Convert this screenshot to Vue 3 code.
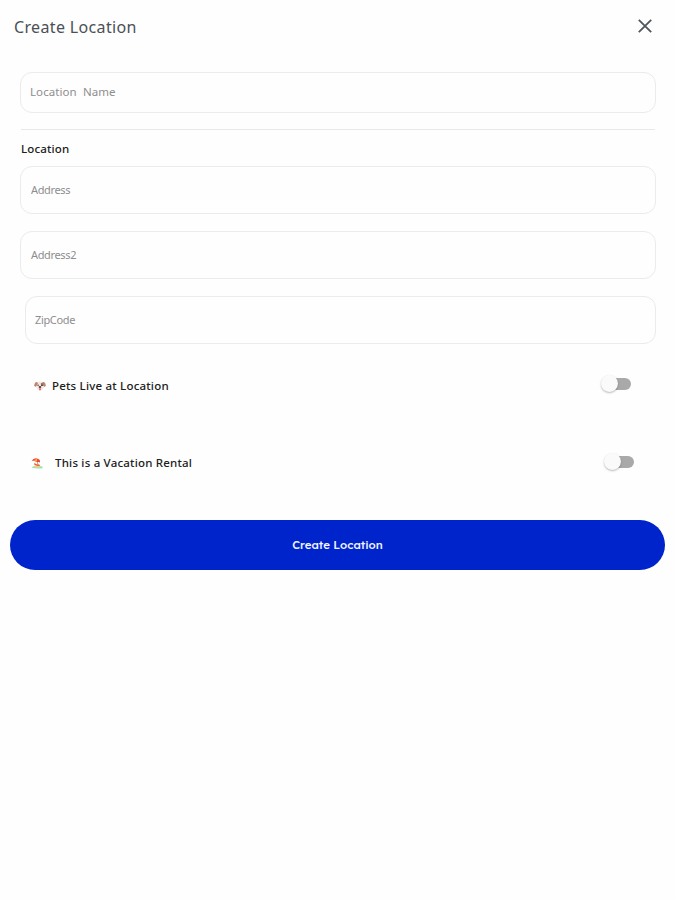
<script setup>
import { ref } from 'vue';

const name = ref('');
const address = ref('');
const address2 = ref('');
const zipCode = ref('');
const hasPets = ref(false);
const isRental = ref(false);
</script>

<template>
  <form class="CreateLocation" @submit.prevent>
    <header class="Header">
      <h1 class="Header-title">Create Location</h1>
      <button class="Header-close" type="button" aria-label="Close">
        <svg width="14" height="14" viewBox="0 0 14 14">
          <path d="M.8 .8 13.2 13.2M13.2 .8 .8 13.2" fill="none" stroke="currentColor" stroke-width="1.8" />
        </svg>
      </button>
    </header>

    <div class="Fields">
      <input v-model="name" class="Field Field--name" placeholder="Location  Name">
      <hr class="Divider">
      <h2 class="Fields-heading">Location</h2>
      <input v-model="address" class="Field" placeholder="Address">
      <input v-model="address2" class="Field" placeholder="Address2">
      <input v-model="zipCode" class="Field Field--zip" placeholder="ZipCode">
    </div>

    <label class="Option Option--pets">
      <svg class="Option-icon" width="12" height="10" viewBox="0 0 12 10">
        <path d="M2.6 1.2Q6 -.2 9.4 1.2L9.8 6Q8.6 9.5 6 9.5T2.2 6Z" fill="#f3e9e4" />
        <path d="M2.8 1.1Q.4 1.4 .2 4.8 1.4 6.6 2.6 4.8L4 2.2Z" fill="#b98670" />
        <path d="M9.2 1.1Q11.6 1.4 11.8 4.8 10.6 6.6 9.4 4.8L7.2 2.6Z" fill="#b98670" />
        <path d="M6.8 2.2 9.2 1.8 9.2 5 7.2 5Z" fill="#a87561" />
        <circle cx="4.1" cy="4.2" r=".8" fill="#594743" />
        <circle cx="7.9" cy="4.2" r=".8" fill="#49332f" />
        <ellipse cx="6" cy="6" rx="1.3" ry=".9" fill="#4c3d3b" />
        <path d="M5.1 7.2h1.8v1.6q-.9 1.2-1.8 0Z" fill="#e0655f" />
      </svg>
      <span class="Option-label">Pets Live at Location</span>
      <input v-model="hasPets" class="Switch" type="checkbox">
    </label>

    <label class="Option Option--rental">
      <svg class="Option-icon" width="12" height="11" viewBox="0 0 12 11">
        <path d="M1 9Q5 7 11.5 8.6v1.6Q6 11 1 9.8Z" fill="#7be8dc" />
        <path d="M2 8.2Q6 6 11 8.4L9 9.4H3Z" fill="#f6cf72" />
        <path d="M6 3 7.3 7.6" fill="none" stroke="#b47a55" stroke-width=".8" />
        <path d="M.6 2.8Q2.5 -.2 6 .4T9 4.6L7.4 4 5.4 4 3.2 2.8Z" fill="#ee4a33" />
        <path d="M3.2 2.8Q3.8 1 6 .4 6.4 2.4 5.4 4Z" fill="#f9a24c" />
        <path d="M3.2 5.6 5.6 7 8.8 7.3" fill="none" stroke="#e8603c" stroke-width="1.3" />
      </svg>
      <span class="Option-label">This is a Vacation Rental</span>
      <input v-model="isRental" class="Switch" type="checkbox">
    </label>

    <button class="Submit" type="submit">Create Location</button>
  </form>
</template>

<style>
body {
  background-color: #fefefe;
}
</style>

<style scoped>
.CreateLocation {
  display: flex;
  flex-direction: column;
  font-family: "Noto Sans", "Open Sans", sans-serif;
  color: #202020;
}

.Header {
  display: flex;
  align-items: center;
  justify-content: space-between;
  height: 52px;
  padding: 0 23px 0 14px;
}

.Header-title {
  margin: 2px 0 0;
  font-size: 16px;
  font-weight: 400;
  letter-spacing: .35px;
  color: #4a5056;
}

.Header-close {
  display: flex;
  padding: 0;
  border: 0;
  color: #50565b;
  background: none;
}

.Fields {
  display: flex;
  flex-direction: column;
  padding: 20px 19px 0 20px;
}

.Field {
  box-sizing: border-box;
  height: 48px;
  margin-bottom: 17px;
  padding: 0 10px 2px;
  border: 1px solid #ebebeb;
  border-radius: 12px;
  outline: 0;
  font: inherit;
  font-size: 11px;
  letter-spacing: -.35px;
  background-color: #fefefe;
}

.Field::placeholder {
  color: #8e8e8e;
  white-space: pre;
  opacity: 1;
}

.Field--name {
  height: 41px;
  margin-bottom: 16px;
  padding: 0 9px 3px;
  font-size: 11.5px;
  letter-spacing: .08px;
}

.Field--zip {
  margin-bottom: 0;
  margin-left: 5px;
  padding-left: 9px;
}

.Divider {
  width: 634px;
  height: 1px;
  margin: 0 0 0 1px;
  border: 0;
  background-color: #e8e8e8;
}

.Fields-heading {
  margin: 10px 0 9px 1px;
  font-size: 11.5px;
  font-weight: 500;
  line-height: 17px;
  letter-spacing: .15px;
}

.Option {
  display: flex;
  align-items: center;
  height: 20px;
}

.Option--pets {
  margin-top: 30px;
  padding: 0 44px 0 34px;
}

.Option--rental {
  margin-top: 58px;
  padding: 0 41px 0 31px;
}

.Option-icon {
  flex: none;
  margin-top: 3px;
}

.Option-label {
  flex: 1 1 auto;
  margin: 4px 0 0 6px;
  font-size: 11.5px;
  font-weight: 500;
  line-height: 16px;
  letter-spacing: .2px;
}

.Option--rental .Option-label {
  margin-top: 2px;
  margin-left: 12px;
}

.Switch {
  position: relative;
  width: 27px;
  height: 12px;
  margin: 0;
  border-radius: 6px;
  appearance: none;
  background-color: #a9a9a9;
}

.Switch::before {
  content: "";
  position: absolute;
  top: -3px;
  left: -3px;
  width: 17px;
  height: 17px;
  border-radius: 50%;
  background-color: #fafafa;
  box-shadow: 0 1px 2px rgba(0, 0, 0, .28);
}

.Switch:checked::before {
  left: 13px;
}

.Submit {
  height: 50px;
  margin: 48px 10px 0;
  padding: 0 6px 2px;
  border: 0;
  border-radius: 25px;
  font-family: Lexend, Inter, sans-serif;
  font-size: 11.5px;
  font-weight: 500;
  color: #f2f4ff;
  background-color: #0024cc;
}
</style>
